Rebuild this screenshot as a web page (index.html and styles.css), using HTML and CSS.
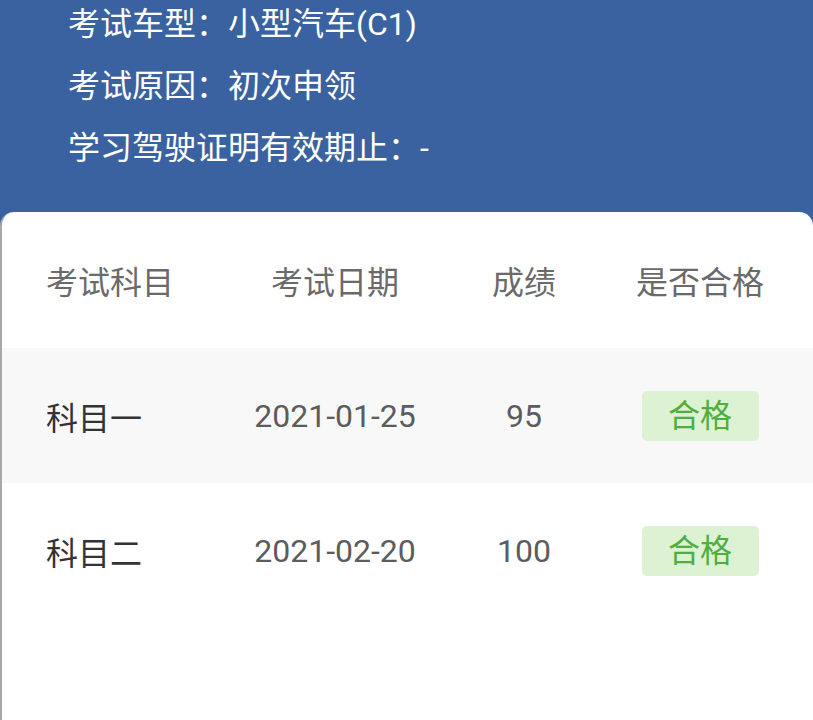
FILE: index.html
```html
<!DOCTYPE html>
<html lang="zh-CN">
<head>
<meta charset="utf-8">
<link rel="stylesheet" href="styles.css">
</head>
<body>
<div class="page">
  <section class="info">
    <div class="line">考试车型：小型汽车(C1)</div>
    <div class="line">考试原因：初次申领</div>
    <div class="line">学习驾驶证明有效期止：-</div>
  </section>
  <section class="card">
    <div class="row head">
      <div class="c1">考试科目</div>
      <div class="c2">考试日期</div>
      <div class="c3">成绩</div>
      <div class="c4">是否合格</div>
    </div>
    <div class="row alt">
      <div class="c1 subj">科目一</div>
      <div class="c2">2021-01-25</div>
      <div class="c3">95</div>
      <div class="c4"><span class="badge">合格</span></div>
    </div>
    <div class="row">
      <div class="c1 subj">科目二</div>
      <div class="c2">2021-02-20</div>
      <div class="c3">100</div>
      <div class="c4"><span class="badge">合格</span></div>
    </div>
  </section>
</div>
</body>
</html>
```
FILE: styles.css
```css
html, body {
  margin: 0;
  padding: 0;
}
body {
  background: #3b62a0;
  font-family: "Roboto", "Noto Sans CJK SC", sans-serif;
  font-size: 32px;
  overflow: hidden;
}
.page {
  height: 720px;
  display: flex;
  flex-direction: column;
}
.info {
  margin-top: -7px;
  margin-bottom: 33px;
  padding-left: 68px;
  color: #ffffff;
}
.info .line {
  height: 62px;
  line-height: 62px;
  white-space: nowrap;
}
.card {
  flex: 1;
  background: #ffffff;
  border-radius: 14px 14px 0 0;
  border-left: 2px solid #a8a8a8;
}
.row {
  display: grid;
  grid-template-columns: 194px 190px 188px 164px;
  padding-left: 44px;
  height: 135px;
  align-items: center;
  color: #666666;
}
.row.head {
  height: 136px;
  color: #6a6a6a;
}
.row.alt {
  background: #f8f8f8;
}
.c2, .c3, .c4 {
  text-align: center;
}
.subj {
  color: #333333;
}
.c2, .c3 {
  color: #5c5c5c;
}
.head .c2, .head .c3 {
  color: #6a6a6a;
}
.badge {
  display: inline-block;
  width: 117px;
  height: 50px;
  line-height: 50px;
  text-align: center;
  border-radius: 5px;
  background: #dcf2d3;
  color: #4fae3d;
}
```
